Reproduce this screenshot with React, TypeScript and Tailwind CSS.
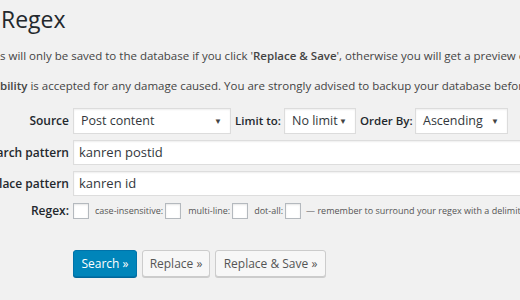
import { ReactNode } from "react";

function Select({ value, width }: { value: string; width: string }) {
  return (
    <div
      className={`${width} h-[26px] shrink-0 flex items-center justify-between whitespace-nowrap bg-white border border-[#dcdcdc] shadow-[inset_0_1px_2px_rgba(0,0,0,0.07)] pl-[7px] pr-[8px] text-[12.5px] text-[#32373c]`}
    >
      <span>{value}</span>
      <span className="text-[8px] text-[#444]">▼</span>
    </div>
  );
}

function Label({ children }: { children: ReactNode }) {
  return (
    <div className="w-[69px] shrink-0 flex justify-end overflow-hidden whitespace-nowrap font-semibold text-[12px] leading-[18px] text-[#23282d]">
      <span>{children}</span>
    </div>
  );
}

function Check({ className = "" }: { className?: string }) {
  return (
    <span
      className={`inline-block shrink-0 w-[16px] h-[16px] bg-white border border-[#b4b9be] shadow-[inset_0_1px_2px_rgba(0,0,0,0.1)] ${className}`}
    />
  );
}

function Field({ value }: { value: string }) {
  return (
    <div className="w-[460px] h-[25px] shrink-0 flex items-center bg-white border border-[#ddd] shadow-[inset_0_1px_2px_rgba(0,0,0,0.07)] px-[5px] text-[13px] text-[#32373c] whitespace-nowrap">
      {value}
    </div>
  );
}

export default function App() {
  return (
    <div
      className="w-[520px] h-[300px] overflow-hidden bg-[#f1f1f1] text-[#444]"
      style={{ fontFamily: '"Open Sans", "Noto Sans", sans-serif' }}
    >
      <h1 className="pt-[3px] pl-[1px] text-[23px] leading-[32px] text-[#23282d] whitespace-nowrap">
        Regex
      </h1>
      <p className="mt-[12px] text-[11.5px] leading-[18px] whitespace-nowrap">
        s will only be saved to the database if you click '
        <strong className="font-semibold">Replace &amp; Save</strong>', otherwise you will get a
        preview of the results.
      </p>
      <p className="mt-[12px] text-[11.5px] leading-[18px] whitespace-nowrap">
        <strong className="font-semibold">bility</strong> is accepted for any damage caused. You are
        strongly advised to backup your database before making any changes.
      </p>

      <div className="mt-[13px] flex flex-col gap-[6px]">
        <div className="flex items-center gap-[4px]">
          <Label>Source</Label>
          <Select value="Post content" width="w-[158px]" />
          <span className="w-[45px] shrink-0 font-semibold text-[11.5px] text-[#23282d] whitespace-nowrap">
            Limit to:
          </span>
          <Select value="No limit" width="w-[72px]" />
          <span className="w-[51px] shrink-0 font-semibold text-[11.5px] text-[#23282d] whitespace-nowrap">
            Order By:
          </span>
          <Select value="Ascending" width="w-[93px]" />
        </div>
        <div className="flex items-center gap-[4px]">
          <Label>Search pattern</Label>
          <Field value="kanren postid" />
        </div>
        <div className="flex items-center gap-[4px]">
          <Label>Replace pattern</Label>
          <Field value="kanren id" />
        </div>
        <div className="flex items-center whitespace-nowrap text-[9px] text-[#555]">
          <Label>Regex:</Label>
          <Check className="ml-[4px]" />
          <span className="ml-[6px] shrink-0">case-insensitive:</span>
          <Check className="ml-[2px]" />
          <span className="ml-[7px] shrink-0">multi-line:</span>
          <Check className="ml-[2px]" />
          <span className="ml-[6px] shrink-0">dot-all:</span>
          <Check className="ml-[2px]" />
          <span className="ml-[5px]">— remember to surround your regex with a delimiter!</span>
        </div>
      </div>

      <div className="mt-[30px] ml-[73px] flex gap-[5px] text-[12px]">
        <button className="w-[64px] h-[27px] flex items-center justify-center rounded-[3px] bg-[#0085ba] border border-[#0073aa] shadow-[0_1px_0_#006799] text-white whitespace-nowrap">
          Search »
        </button>
        <button className="w-[68px] h-[27px] flex items-center justify-center rounded-[3px] bg-[#f7f7f7] border border-[#ccc] shadow-[0_1px_0_#ccc] text-[#555] whitespace-nowrap">
          Replace »
        </button>
        <button className="w-[111px] h-[27px] flex items-center justify-center rounded-[3px] bg-[#f7f7f7] border border-[#ccc] shadow-[0_1px_0_#ccc] text-[#555] whitespace-nowrap">
          Replace &amp; Save »
        </button>
      </div>
    </div>
  );
}
